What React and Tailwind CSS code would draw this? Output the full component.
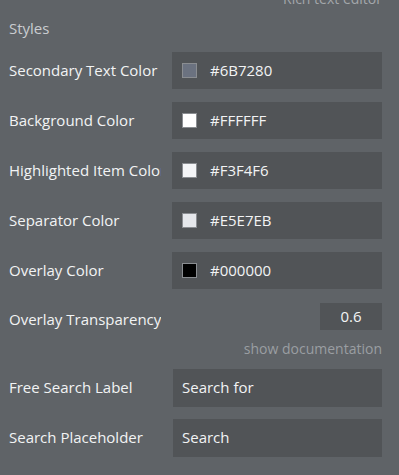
const colorRows = [
  { label: 'Secondary Text Color', value: '#6B7280', swatch: 'bg-[#6b7280]' },
  { label: 'Background Color', value: '#FFFFFF', swatch: 'bg-[#ffffff]' },
  { label: 'Highlighted Item Color', value: '#F3F4F6', swatch: 'bg-[#f3f4f6]' },
  { label: 'Separator Color', value: '#E5E7EB', swatch: 'bg-[#e5e7eb]' },
  { label: 'Overlay Color', value: '#000000', swatch: 'bg-[#000000]' },
]

const textRows = [
  { label: 'Free Search Label', value: 'Search for' },
  { label: 'Search Placeholder', value: 'Search' },
]

function Label({ children }) {
  return (
    <div className="w-[152px] shrink-0 overflow-hidden whitespace-nowrap text-[15px] text-[#f2f3f4]">
      {children}
    </div>
  )
}

export default function App() {
  return (
    <div
      className="flex h-[475px] w-[399px] flex-col overflow-hidden bg-[#5f6367] pl-[9px] pr-[17px]"
      style={{ fontFamily: '"Open Sans", "Noto Sans", sans-serif' }}
    >
      <div className="mt-[-10px] h-[18px] text-right text-[14px] leading-[18px] text-[#a3a7ab]">
        Rich text editor
      </div>

      <div className="mt-[10px] text-[15px] leading-[20px] text-[#c9ccd0]">Styles</div>

      <div className="mt-[14px] flex flex-col gap-[13px]">
        {colorRows.map((row) => (
          <div key={row.label} className="flex items-center justify-between">
            <Label>{row.label}</Label>
            <div className="flex h-[37px] w-[210px] items-center bg-[#515457] pl-[10px]">
              <div className={`h-[15px] w-[15px] border border-[#8a8d91] ${row.swatch}`} />
              <span className="ml-[13px] text-[15px] text-[#f2f3f4]">{row.value}</span>
            </div>
          </div>
        ))}
      </div>

      <div className="mt-[13px] flex items-center justify-between">
        <div className="pt-[6px]">
          <Label>Overlay Transparency</Label>
        </div>
        <div className="flex h-[27px] w-[62px] items-center justify-center bg-[#515457] text-[15px] text-[#f2f3f4]">
          0.6
        </div>
      </div>
      <div className="mt-[9px] text-right text-[14px] leading-[18px] text-[#9a9ea2]">show documentation</div>

      <div className="mt-[11px] flex flex-col gap-[12px]">
        {textRows.map((row) => (
          <div key={row.label} className="flex items-center justify-between">
            <Label>{row.label}</Label>
            <div className="flex h-[38px] w-[209px] items-center bg-[#515457] pl-[9px] text-[15px] text-[#f2f3f4]">
              {row.value}
            </div>
          </div>
        ))}
      </div>
    </div>
  )
}
